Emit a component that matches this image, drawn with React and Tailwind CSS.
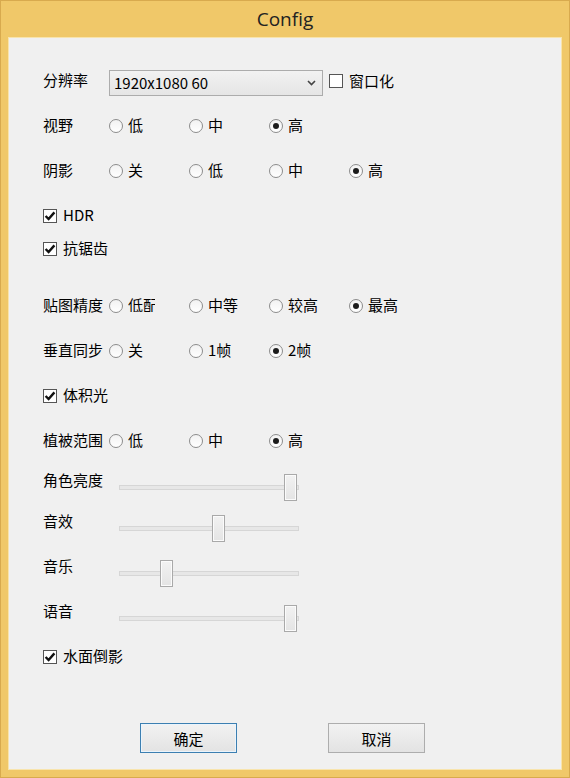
import React from "react";

const FONT = { fontFamily: '"Noto Sans CJK SC", "Noto Sans", sans-serif' };

function Check({ checked }) {
  return (
    <span className="w-[14px] h-[14px] shrink-0 border border-[#555] bg-white flex items-center justify-center">
      {checked && (
        <svg width="12" height="12" viewBox="0 0 12 12">
          <path d="M1.6 6 L4.6 9 L10.4 2.4" fill="none" stroke="#111" strokeWidth="2.4" />
        </svg>
      )}
    </span>
  );
}

function CheckRow({ label, checked = true, className = "" }) {
  return (
    <div className={"h-[26px] flex items-center gap-[6px] " + className}>
      <Check checked={checked} />
      <span className="leading-none mb-[3px]">{label}</span>
    </div>
  );
}

function Radio({ label, checked, clip }) {
  return (
    <div className="w-[80px] shrink-0 flex items-center gap-[5px]">
      <span className="w-[14px] h-[14px] shrink-0 rounded-full border border-[#8c8c8c] bg-gradient-to-b from-[#f2f2f2] to-white flex items-center justify-center">
        {checked && <span className="w-[6px] h-[6px] rounded-full bg-[#1c1c1c]" />}
      </span>
      {clip ? (
        <span className="leading-none mb-[3px] w-[27px] overflow-hidden whitespace-nowrap">{label}</span>
      ) : (
        <span className="leading-none mb-[3px] whitespace-nowrap">{label}</span>
      )}
    </div>
  );
}

function RadioRow({ label, options, checked, className = "", clipFirst }) {
  return (
    <div className={"h-[26px] flex items-center " + className}>
      <span className="w-[66px] shrink-0 leading-none mb-[4px] whitespace-nowrap">{label}</span>
      {options.map((o, i) => (
        <Radio key={o} label={o} checked={i === checked} clip={clipFirst && i === 0} />
      ))}
    </div>
  );
}

function SliderRow({ label, pos, className = "" }) {
  return (
    <div className={"h-[27px] flex items-center " + className}>
      <span className="w-[76px] shrink-0 leading-none mb-[16px] whitespace-nowrap">{label}</span>
      <div className="relative w-[180px] h-[27px] flex items-center">
        <div className="w-full h-[5px] border border-[#d6d6d6] bg-[#e7e7e7]" />
        <div
          className="absolute top-0 w-[13px] h-[27px] border border-[#a9a9a9] bg-gradient-to-b from-[#f2f2f2] to-[#e4e4e4] shadow-[inset_0_0_0_1px_#fbfbfb]"
          style={{ left: pos }}
        />
      </div>
    </div>
  );
}

export default function App() {
  return (
    <div
      className="w-[570px] h-[778px] bg-[#f0c869] border border-[#d8aa4e] flex flex-col text-[15px] text-black"
      style={FONT}
    >
      <div
        className="h-[36px] shrink-0 flex items-center justify-center text-[19px] text-[#222]"
        style={{ fontFamily: '"Open Sans", "Noto Sans", sans-serif' }}
      >
        Config
      </div>
      <div className="mx-[7px] mb-[7px] flex-1 border border-[#f8e4ad] bg-[#f0f0f0] flex flex-col pl-[34px] pt-[32px]">
        {/* resolution */}
        <div className="h-[26px] flex items-center">
          <span className="w-[66px] shrink-0 leading-none mb-[8px]">分辨率</span>
          <div className="w-[214px] h-[26px] border border-[#acacac] bg-gradient-to-b from-[#f2f2f2] to-[#e5e5e5] flex items-center pl-[4px] pr-[6px]">
            <span className="flex-1 leading-none mb-[2px]">1920x1080 60</span>
            <svg width="9" height="6" viewBox="0 0 9 6">
              <path d="M1 1 L4.5 4.5 L8 1" fill="none" stroke="#444" strokeWidth="1.6" />
            </svg>
          </div>
          <div className="ml-[6px] flex items-center gap-[6px] mb-[4px]">
            <Check checked={false} />
            <span className="leading-none mb-[2px]">窗口化</span>
          </div>
        </div>

        <RadioRow className="mt-[17px]" label="视野" options={["低", "中", "高"]} checked={2} />
        <RadioRow className="mt-[19px]" label="阴影" options={["关", "低", "中", "高"]} checked={3} />
        <CheckRow className="mt-[19px]" label="HDR" />
        <CheckRow className="mt-[7px]" label="抗锯齿" />
        <RadioRow
          className="mt-[31px]"
          label="贴图精度"
          options={["低配", "中等", "较高", "最高"]}
          checked={3}
          clipFirst
        />
        <RadioRow className="mt-[19px]" label="垂直同步" options={["关", "1帧", "2帧"]} checked={2} />
        <CheckRow className="mt-[19px]" label="体积光" />
        <RadioRow className="mt-[19px]" label="植被范围" options={["低", "中", "高"]} checked={2} />

        <SliderRow className="mt-[20px]" label="角色亮度" pos={165} />
        <SliderRow className="mt-[14px]" label="音效" pos={93} />
        <SliderRow className="mt-[18px]" label="音乐" pos={41} />
        <SliderRow className="mt-[18px]" label="语音" pos={165} />

        <CheckRow className="mt-[12px]" label="水面倒影" />

        <div className="mt-[53px] flex items-center pl-[97px] gap-[91px]">
          <button className="w-[97px] h-[30px] border border-[#3c7fb1] bg-gradient-to-b from-[#f2f2f2] to-[#e3e3e3] shadow-[inset_0_0_0_1px_#eaf4fc] leading-none">
            确定
          </button>
          <button className="w-[97px] h-[30px] border border-[#adadad] bg-gradient-to-b from-[#f2f2f2] to-[#e3e3e3] leading-none">
            取消
          </button>
        </div>
      </div>
    </div>
  );
}
